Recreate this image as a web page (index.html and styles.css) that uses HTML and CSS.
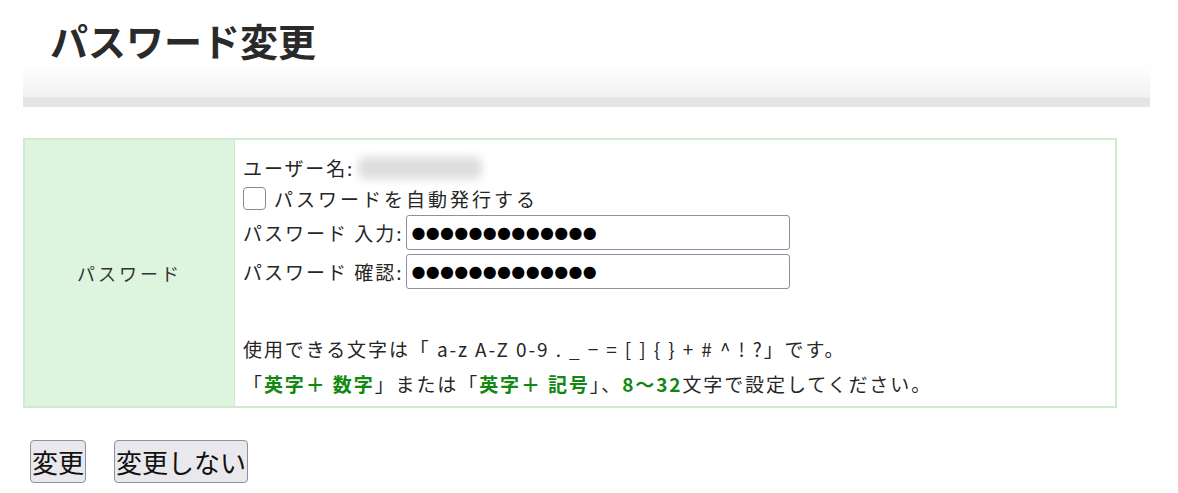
FILE: index.html
```html
<!DOCTYPE html>
<html lang="ja">
<head>
  <meta charset="UTF-8" />
  <title>パスワード変更</title>
  <link rel="stylesheet" href="styles.css">
</head>
<body>
  <div class="page">
    <!-- Page title -->
    <div class="page-head">
      <h1>パスワード変更</h1>
    </div>

    <form class="pw-form">
      <table class="form-table">
        <tr>
          <th>パスワード</th>
          <td>
            <div class="row">ユーザー名:<span class="user-blur"></span></div>
            <div class="row check-row">
              <label class="auto-label">
                <input type="checkbox" class="check" />
                <span>パスワードを自動発行する</span>
              </label>
            </div>
            <div class="row input-row">
              <span class="field-label">パスワード 入力:</span>
              <input type="text" class="pw-input" value="●●●●●●●●●●●●●" readonly />
            </div>
            <div class="row input-row">
              <span class="field-label">パスワード 確認:</span>
              <input type="text" class="pw-input" value="●●●●●●●●●●●●●" readonly />
            </div>

            <div class="note">
              <p>使用できる文字は「 a-z A-Z 0-9 . _ − = [ ] { } + # ^ ! ?」です。</p>
              <p>「<strong>英字＋ 数字</strong>」または「<strong>英字＋ 記号</strong>」、<strong>8〜32</strong>文字で設定してください。</p>
            </div>
          </td>
        </tr>
      </table>

      <div class="button-group">
        <button type="submit">変更</button>
        <button type="button">変更しない</button>
      </div>
    </form>
  </div>
</body>
</html>
```

FILE: styles.css
```css
body {
  margin: 0;
  font-family: "Noto Sans CJK JP", "Noto Sans", sans-serif;
  color: #222;
  background: #fff;
}

.page {
  padding-left: 23px;
}

/* Title band */
.page-head {
  width: 1127px;
  height: 107px;
  box-sizing: border-box;
  background: linear-gradient(to bottom, #fff 0, #fff 64px, #fafafa 76px, #f2f2f2 97px, #e3e3e3 98px, #e6e6e6 107px);
}

.page-head h1 {
  margin: 0;
  padding: 14px 0 0 27px;
  font-size: 38px;
  line-height: 52px;
  font-weight: bold;
  color: #2a2a2a;
}

/* Form table */
.form-table {
  margin-top: 31px;
  width: 1094px;
  border-collapse: collapse;
  border: 2px solid #cdeccf;
}

.form-table th {
  width: 209px;
  background: #ddf5df;
  border-right: 1px solid #cdeccf;
  font-weight: normal;
  font-size: 18px;
  letter-spacing: 3px;
  color: #333;
  padding: 0;
}

.form-table td {
  padding: 12px 0 5px 8px;
  font-size: 19px;
  color: #262626;
  letter-spacing: 1.9px;
}

.row {
  display: flex;
  align-items: center;
  height: 31px;
}

.check-row {
  height: 30px;
  letter-spacing: 3px;
}

.input-row {
  height: 39px;
}

.user-blur {
  display: inline-block;
  width: 124px;
  height: 22px;
  margin-left: 4px;
  background: #ddd;
  border-radius: 8px;
  filter: blur(4px);
}

.auto-label {
  display: flex;
  align-items: center;
}

.check {
  appearance: none;
  width: 23px;
  height: 23px;
  margin: 0 8px 0 0;
  border: 1px solid #8c8c96;
  border-radius: 4px;
  background: #fff;
}

.field-label {
  margin-right: 2px;
  letter-spacing: 2px;
}

.pw-input {
  width: 384px;
  height: 35px;
  box-sizing: border-box;
  border: 1px solid #8f8f9d;
  border-radius: 3px;
  padding: 0 5px;
  font-family: "DejaVu Sans", sans-serif;
  font-size: 16px;
  letter-spacing: 0.3px;
  color: #000;
}

.note {
  margin-top: 40px;
}

.note p {
  margin: 0;
  line-height: 35px;
}

.note strong {
  color: #118811;
}

/* Buttons */
.button-group {
  display: flex;
  gap: 28px;
  margin: 32px 0 0 7px;
}

button {
  font-family: "Noto Sans CJK JP", sans-serif;
  font-size: 26px;
  line-height: 39px;
  padding: 1px 1px;
  background: #e9e9ed;
  border: 1px solid #8f8f9d;
  border-radius: 4px;
  color: #111;
}
```
